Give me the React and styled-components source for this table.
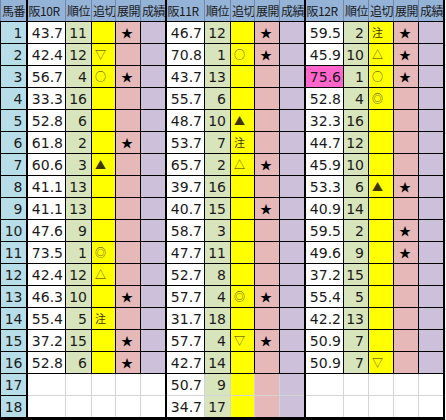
import React from "react";
import styled, { createGlobalStyle, css } from "styled-components";

const GlobalStyle = createGlobalStyle`
  body {
    margin: 0;
    background: #fff;
  }
`;

// [値, 順位, 追切, 展開, ハイライト]
const groups = [
  {
    title: "阪10R",
    rows: [
      ["43.7", 11, "", "★"],
      ["42.4", 12, "▽", ""],
      ["56.7", 4, "○", "★"],
      ["33.3", 16, "", ""],
      ["52.8", 6, "", ""],
      ["61.8", 2, "", "★"],
      ["60.6", 3, "▲", ""],
      ["41.1", 13, "", ""],
      ["41.1", 13, "", ""],
      ["47.6", 9, "", ""],
      ["73.5", 1, "◎", ""],
      ["42.4", 12, "△", ""],
      ["46.3", 10, "", "★"],
      ["55.4", 5, "注", ""],
      ["37.2", 15, "", "★"],
      ["52.8", 6, "", "★"],
      null,
      null,
    ],
  },
  {
    title: "阪11R",
    rows: [
      ["46.7", 12, "", "★"],
      ["70.8", 1, "○", "★"],
      ["43.7", 13, "", ""],
      ["55.7", 6, "", ""],
      ["48.7", 10, "▲", ""],
      ["53.7", 7, "注", ""],
      ["65.7", 2, "△", "★"],
      ["39.7", 16, "", ""],
      ["40.7", 15, "", "★"],
      ["58.7", 3, "", ""],
      ["47.7", 11, "", ""],
      ["52.7", 8, "", ""],
      ["57.7", 4, "◎", "★"],
      ["31.7", 18, "", ""],
      ["57.7", 4, "▽", "★"],
      ["42.7", 14, "", ""],
      ["50.7", 9, "", ""],
      ["34.7", 17, "", ""],
    ],
  },
  {
    title: "阪12R",
    rows: [
      ["59.5", 2, "注", "★"],
      ["45.9", 10, "△", "★"],
      ["75.6", 1, "○", "★", true],
      ["52.8", 4, "◎", ""],
      ["32.3", 16, "", ""],
      ["44.7", 12, "", ""],
      ["45.9", 10, "", ""],
      ["53.3", 6, "▲", "★"],
      ["40.9", 14, "", ""],
      ["59.5", 2, "", "★"],
      ["49.6", 9, "", "★"],
      ["37.2", 15, "", ""],
      ["55.4", 5, "", ""],
      ["42.2", 13, "", ""],
      ["50.9", 7, "", ""],
      ["50.9", 7, "▽", ""],
      null,
      null,
    ],
  },
];

const colWidths = [26, 39, 26, 24, 25, 25, 39, 26, 24, 25, 25, 39, 25, 25, 25, 25];

const fills = {
  no: "#b7dee8",
  val: "#ffffff",
  rank: "#d8e4bc",
  oi: "#ffff00",
  ten: "#e6b8b7",
  res: "#ccc0da",
};

const Sheet = styled.table`
  border-collapse: collapse;
  table-layout: fixed;
  width: 443px;
  font-family: "DejaVu Sans", "Noto Sans CJK JP", sans-serif;
  font-size: 14px;
  color: #1a1a1a;
  border-bottom: 3px solid #000;
  border-right: 2px solid #000;
`;

const HeadCell = styled.th`
  height: 21px;
  padding: 0 0 0 1px;
  background: #95b3d7;
  font-family: "Noto Sans CJK JP", "DejaVu Sans", sans-serif;
  font-weight: normal;
  font-size: 12px;
  letter-spacing: -0.4px;
  text-align: left;
  white-space: nowrap;
  overflow: hidden;
  border-bottom: 1px solid #000;
  border-left: ${(p) => (p.$thick ? "2px solid #000" : "1px solid #6f87a8")};
`;

const Cell = styled.td`
  height: 21px;
  padding: 0;
  background: ${(p) => (p.$hl ? "#ff66cc" : p.$fill ? fills[p.$kind] : "#fff")};
  border: 1px solid ${(p) => (p.$grid ? "#d4d4d4" : "#000")};
  ${(p) =>
    p.$thick &&
    css`
      border-left: 2px solid #000;
    `}
  ${(p) =>
    p.$top &&
    css`
      border-top: 1px solid #000;
    `}
  white-space: nowrap;
  overflow: hidden;
`;

const Num = styled.div`
  text-align: right;
  padding-right: ${(p) => p.$pad}px;
`;

const Mark = styled.div`
  font-family: "Noto Sans CJK JP", "DejaVu Sans", sans-serif;
  font-size: ${(p) => (p.$star ? 12 : 11)}px;
  line-height: 1;
  padding-left: ${(p) => (p.$star ? 5 : 3)}px;
  color: ${(p) => (p.$star ? "#000" : "#3d3500")};
`;

const heads = ["順位", "追切", "展開", "成績"];

export default function App() {
  return (
    <>
      <GlobalStyle />
      <Sheet>
        <colgroup>
          {colWidths.map((w, i) => (
            <col key={i} style={{ width: w }} />
          ))}
        </colgroup>
        <thead>
          <tr>
            <HeadCell>馬番</HeadCell>
            {groups.map((g) => (
              <React.Fragment key={g.title}>
                <HeadCell $thick>{g.title}</HeadCell>
                {heads.map((h) => (
                  <HeadCell key={h}>{h}</HeadCell>
                ))}
              </React.Fragment>
            ))}
          </tr>
        </thead>
        <tbody>
          {Array.from({ length: 18 }, (_, i) => (
            <tr key={i}>
              <Cell $kind="no" $fill>
                <Num $pad={3}>{i + 1}</Num>
              </Cell>
              {groups.map((g, gi) => {
                const r = g.rows[i];
                if (!r) {
                  const first = i === 16;
                  return (
                    <React.Fragment key={gi}>
                      <Cell $thick $grid $top={first} />
                      <Cell $grid $top={first} />
                      <Cell $grid $top={first} />
                      <Cell $grid $top={first} />
                      <Cell $grid $top={first} />
                    </React.Fragment>
                  );
                }
                const extra = i >= 16;
                return (
                  <React.Fragment key={gi}>
                    <Cell $thick $kind="val" $fill $hl={r[4]} $grid={extra} $top={i === 16}>
                      <Num $pad={2}>{r[0]}</Num>
                    </Cell>
                    <Cell $kind="rank" $fill $grid={extra} $top={i === 16}>
                      <Num $pad={4}>{r[1]}</Num>
                    </Cell>
                    <Cell $kind="oi" $fill $grid={extra} $top={i === 16}>
                      <Mark>{r[2]}</Mark>
                    </Cell>
                    <Cell $kind="ten" $fill $grid={extra} $top={i === 16}>
                      <Mark $star>{r[3]}</Mark>
                    </Cell>
                    <Cell $kind="res" $fill $grid={extra} $top={i === 16} />
                  </React.Fragment>
                );
              })}
            </tr>
          ))}
        </tbody>
      </Sheet>
    </>
  );
}
